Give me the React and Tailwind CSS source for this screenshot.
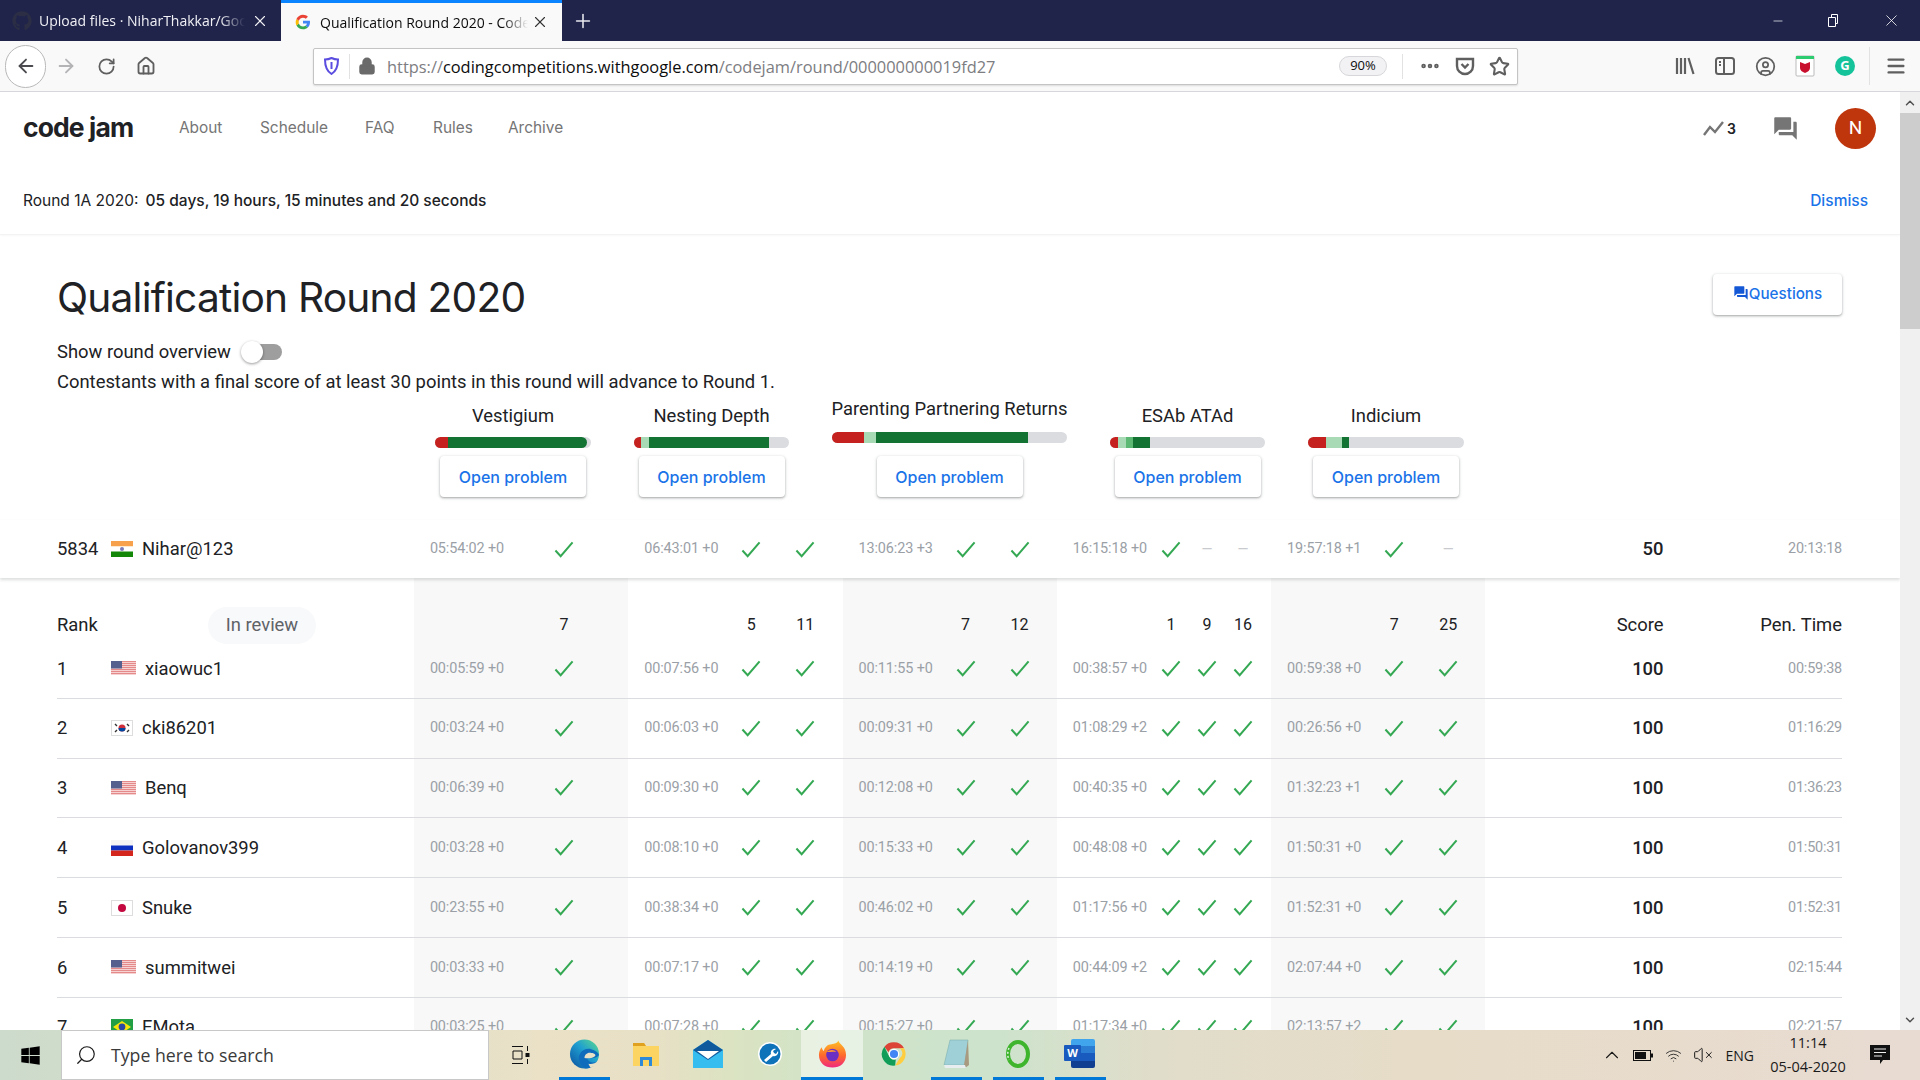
import React from 'react';
import { ArrowLeft, ArrowRight, RotateCw, Home, Lock, Star, X, Plus, Minus, Search, ChevronUp, ChevronDown, Ellipsis, Menu, CircleUser, VolumeX, Wifi } from 'lucide-react';
import { FaGithub, FaWindows } from 'react-icons/fa';

const problems = [
  { name: 'Vestigium', width: 'w-[156px]', titleGap: 'mb-[9px]', barGap: 'mb-[8px]', segs: [['w-[13px]', 'bg-[#c5221f]'], ['w-[139px] rounded-r-full', 'bg-[#137333]']] },
  { name: 'Nesting Depth', width: 'w-[155px]', titleGap: 'mb-[9px]', barGap: 'mb-[8px]', segs: [['w-[7px]', 'bg-[#c5221f]'], ['w-[8px]', 'bg-[#a8dab5]'], ['w-[120px]', 'bg-[#137333]']] },
  { name: 'Parenting Partnering Returns', width: 'w-[235px]', titleGap: 'mb-[11px]', barGap: 'mb-[13px]', segs: [['w-[32px]', 'bg-[#c5221f]'], ['w-[12px]', 'bg-[#a8dab5]'], ['w-[152px]', 'bg-[#137333]']] },
  { name: 'ESAb ATAd', width: 'w-[155px]', titleGap: 'mb-[9px]', barGap: 'mb-[8px]', segs: [['w-[8px]', 'bg-[#c5221f]'], ['w-[8px]', 'bg-[#a8dab5]'], ['w-[7px]', 'bg-[#5bb974]'], ['w-[17px]', 'bg-[#137333]']] },
  { name: 'Indicium', width: 'w-[156px]', titleGap: 'mb-[9px]', barGap: 'mb-[8px]', segs: [['w-[18px]', 'bg-[#c5221f]'], ['w-[16px]', 'bg-[#a8dab5]'], ['w-[7px]', 'bg-[#137333]']] },
];

const ok1 = ['c'];
const ok2 = ['c', 'c'];
const ok3 = ['c', 'c', 'c'];
const allOk = [ok1, ok2, ok2, ok3, ok2];

const rows = [
  { rank: 1, flag: 'us', name: 'xiaowuc1', times: ['00:05:59 +0', '00:07:56 +0', '00:11:55 +0', '00:38:57 +0', '00:59:38 +0'], pen: '00:59:38' },
  { rank: 2, flag: 'kr', name: 'cki86201', times: ['00:03:24 +0', '00:06:03 +0', '00:09:31 +0', '01:08:29 +2', '00:26:56 +0'], pen: '01:16:29' },
  { rank: 3, flag: 'us', name: 'Benq', times: ['00:06:39 +0', '00:09:30 +0', '00:12:08 +0', '00:40:35 +0', '01:32:23 +1'], pen: '01:36:23' },
  { rank: 4, flag: 'ru', name: 'Golovanov399', times: ['00:03:28 +0', '00:08:10 +0', '00:15:33 +0', '00:48:08 +0', '01:50:31 +0'], pen: '01:50:31' },
  { rank: 5, flag: 'jp', name: 'Snuke', times: ['00:23:55 +0', '00:38:34 +0', '00:46:02 +0', '01:17:56 +0', '01:52:31 +0'], pen: '01:52:31' },
  { rank: 6, flag: 'us', name: 'summitwei', times: ['00:03:33 +0', '00:07:17 +0', '00:14:19 +0', '00:44:09 +2', '02:07:44 +0'], pen: '02:15:44' },
  { rank: 7, flag: 'br', name: 'EMota', times: ['00:03:25 +0', '00:07:28 +0', '00:15:27 +0', '01:17:34 +0', '02:13:57 +2'], pen: '02:21:57' },
];

const Flag = ({ code }) => {
  if (code === 'us') {
    return (
      <svg width="25" height="14" viewBox="0 0 25 14" className="shrink-0">
        <rect width="25" height="14" fill="#fbe4e4" />
        {[0, 2, 4, 6, 8, 10, 12].map(y => <rect key={y} y={y} width="25" height="1.2" fill="#e58a8a" />)}
        <rect width="11" height="7.5" fill="#55608f" />
      </svg>
    );
  }
  const box = 'shrink-0';
  if (code === 'kr') {
    return (
      <svg width="22" height="16" viewBox="0 0 22 16" className={box}>
        <rect x=".5" y=".5" width="21" height="15" fill="#fff" stroke="#ddd" />
        <circle cx="11" cy="8" r="3.5" fill="#cd2e3a" />
        <path d="M7.5 8a3.5 3.5 0 0 0 7 0z" fill="#0047a0" />
        <path d="M4 4l2 2M16 4l2 2M4 12l2-2M16 12l2-2" stroke="#333" strokeWidth="1.4" />
      </svg>
    );
  }
  if (code === 'ru') {
    return (
      <svg width="22" height="16" viewBox="0 0 22 16" className={box}>
        <rect width="22" height="5.5" fill="#f4f4f4" />
        <rect y="5.5" width="22" height="5" fill="#0c2fc0" />
        <rect y="10.5" width="22" height="5.5" fill="#d5261e" />
      </svg>
    );
  }
  if (code === 'jp') {
    return (
      <svg width="22" height="16" viewBox="0 0 22 16" className={box}>
        <rect x=".5" y=".5" width="21" height="15" fill="#fff" stroke="#ddd" />
        <circle cx="11" cy="8" r="4" fill="#c3093f" />
      </svg>
    );
  }
  if (code === 'br') {
    return (
      <svg width="22" height="16" viewBox="0 0 22 16" className={box}>
        <rect width="22" height="16" fill="#229e45" />
        <path d="M11 2l9 6-9 6-9-6z" fill="#f8e509" />
        <circle cx="11" cy="8" r="3.4" fill="#2b49a3" />
      </svg>
    );
  }
  return (
    <svg width="22" height="16" viewBox="0 0 22 16" className={box}>
      <rect width="22" height="5.5" fill="#f7a14c" />
      <rect y="5.5" width="22" height="5" fill="#fff" />
      <rect y="10.5" width="22" height="5.5" fill="#138808" />
      <circle cx="11" cy="8" r="2" fill="#7a7ab8" />
    </svg>
  );
};

const Check = () => (
  <svg width="21" height="17" viewBox="0 0 21 17" fill="none" stroke="#34a853" strokeWidth="2.1">
    <path d="M1.5 9.5l5.5 6L19.5 1" />
  </svg>
);

const Mark = ({ value }) => {
  if (value === 'c') return <Check />;
  if (value === '-') return <span className="text-[14px] text-[#c8cace]">—</span>;
  return <span className="text-[16px] text-[#202124]">{value}</span>;
};

// one problem column: 214px wide, penalty time on the left and the marks on the right
const ProblemCell = ({ time, marks, shaded, pad }) => (
  <div className={`flex w-[214.3px] shrink-0 items-center ${shaded ? 'bg-[#f8f8f8]' : ''} ${pad}`}>
    <div className="w-[96px] shrink-0 pl-[10px] text-center text-[14.4px] whitespace-nowrap tracking-[-0.1px] text-[#9aa0a6]">{time}</div>
    <div className="flex w-[108px] shrink-0 items-center justify-around">
      {marks.map((m, i) => <div key={i} className="flex w-[20px] justify-center"><Mark value={m} /></div>)}
    </div>
  </div>
);

const Row = ({ left, times, marks, score, pen, className = '', stripes = true, pad = '', penClass = 'text-[14.4px] tracking-[-0.2px] text-[#9aa0a6]', scoreClass = 'text-[18.4px] font-medium text-[#202124]' }) => (
  <div className={`flex ${className}`}>
    <div className={`flex w-[357px] shrink-0 items-center ${pad}`}>{left}</div>
    {marks.map((m, i) => (
      <ProblemCell key={i} time={times ? times[i] : ''} marks={m} shaded={stripes && i % 2 === 0} pad={pad} />
    ))}
    <div className={`flex w-[178px] shrink-0 items-center justify-end ${scoreClass} ${pad}`}>{score}</div>
    <div className={`flex flex-1 items-center justify-end ${penClass} ${pad}`}>{pen}</div>
  </div>
);

const Contestant = ({ rank, flag, name, rankWidth = 'w-[54px]' }) => (
  <div className="flex items-center text-[18.4px] text-[#202124]">
    <span className={rankWidth}>{rank}</span>
    <div className="flex items-center gap-[9px]">
      <Flag code={flag} />
      <span>{name}</span>
    </div>
  </div>
);

const GoogleG = () => (
  <svg width="16" height="16" viewBox="0 0 48 48">
    <path fill="#4285f4" d="M45 24.5c0-1.600-.1-3.100-.4-4.500H24v8.500h11.800c-.5 2.700-2 5-4.400 6.600l7 5.400C42.500 36.700 45 31.100 45 24.500z" />
    <path fill="#34a853" d="M24 46c5.900 0 10.900-2 14.500-5.400l-7-5.400c-2 1.300-4.500 2.100-7.500 2.100-5.700 0-10.600-3.900-12.300-9.100l-7.300 5.600C7.900 41 15.400 46 24 46z" />
    <path fill="#fbbc05" d="M11.700 28.700c-.4-1.300-.7-2.700-.7-4.200s.3-2.900.7-4.200l-7.300-5.600C2.900 17.700 2 20.800 2 24.500s.9 6.800 2.400 9.800z" />
    <path fill="#ea4335" d="M24 11.200c3.200 0 6.100 1.100 8.400 3.300l6.300-6.300C34.900 4.700 29.900 2.500 24 2.500 15.400 2.500 7.900 7.900 4.400 14.700l7.300 5.600c1.700-5.200 6.600-9.100 12.300-9.100z" />
  </svg>
);

const ToolIcon = ({ children, className = '' }) => (
  <div className={`flex w-[40px] shrink-0 items-center justify-center text-[#5f5f5f] ${className}`}>{children}</div>
);

const UrlIcon = ({ children, className = '' }) => (
  <div className={`flex w-[35px] shrink-0 items-center justify-center text-[#5f5f5f] ${className}`}>{children}</div>
);

const Chrome = () => (
  <div className="flex shrink-0 flex-col font-['Open_Sans',sans-serif]">
    {/* tab strip */}
    <div className="flex h-[41px] items-stretch bg-[#20244a] text-[14px]">
      <div className="flex w-[281px] items-center text-[#f0f0f5]">
        <FaGithub size={20} className="ml-[12px] mr-[7px] text-[#2b2e45]" />
        <span className="w-[206px] overflow-hidden whitespace-nowrap [mask-image:linear-gradient(90deg,black_88%,transparent)]">Upload files · NiharThakkar/GoogleCodeJam</span>
        <X size={18} strokeWidth={1.5} className="ml-[6px]" />
      </div>
      <div className="flex w-[281px] items-center border-t-[3px] border-[#0a84ff] bg-[#f9f9fa] text-[#0c0c0d]">
        <div className="ml-[14px] mr-[9px]"><GoogleG /></div>
        <span className="w-[208px] overflow-hidden whitespace-nowrap [mask-image:linear-gradient(90deg,black_88%,transparent)]">Qualification Round 2020 - Code Jam</span>
        <X size={18} strokeWidth={1.5} className="ml-[3px] text-[#333]" />
      </div>
      <div className="flex w-[42px] items-center justify-center text-[#e8e8ef]"><Plus size={22} strokeWidth={1.7} /></div>
      <div className="ml-auto flex w-[57px] items-center justify-center text-white"><Minus size={14} strokeWidth={1.2} /></div>
      <div className="flex w-[57px] items-center justify-center text-white">
        <svg width="13" height="13" viewBox="0 0 13 13" fill="none" stroke="currentColor"><path d="M3.500 3V.5h6v9H7.500M.5 3.500h7v9h-7z" /></svg>
      </div>
      <div className="flex w-[57px] items-center justify-center text-white"><X size={19} strokeWidth={1} /></div>
    </div>

    {/* toolbar */}
    <div className="flex h-[51px] items-center border-b border-[#d7d7db] bg-[#f9f9fa]">
      <div className="ml-[5px] flex h-[43px] w-[41px] items-center justify-center rounded-full border border-[#b8b8b8] bg-white text-[#4a4a4f]"><ArrowLeft size={22} strokeWidth={2} /></div>
      <ToolIcon><ArrowRight size={22} strokeWidth={2} className="text-[#b4b4b6]" /></ToolIcon>
      <ToolIcon><RotateCw size={19} strokeWidth={2.2} /></ToolIcon>
      <ToolIcon><Home size={20} strokeWidth={2.2} /></ToolIcon>
      {/* url bar */}
      <div className="ml-[147px] flex h-[37px] w-[1205px] shrink-0 items-center rounded-[2px] border border-[#c4c4c4] bg-white shadow-[0_1px_2px_rgba(0,0,0,0.12)]">
        <div className="flex h-[25px] w-[36px] shrink-0 items-center justify-center border-r border-[#e2e2e2]">
          <svg width="15" height="18" viewBox="0 0 15 18"><path d="M7.500 1c2.500 1.200 4.500 1.500 6.500 1.500 0 7-1.500 11.500-6.500 14.500C2.500 14 1 9.500 1 2.500 3 2.500 5 2.200 7.500 1z" fill="#fff" stroke="#5b4de0" strokeWidth="2" /><path d="M6.500 5h2v7h-2z" fill="#5b4de0" /></svg>
        </div>
        <div className="flex w-[37px] shrink-0 items-center justify-center pr-[4px] text-[#6a6a6a]"><Lock size={18} strokeWidth={2.6} fill="currentColor" /></div>
        <div className="flex-1 pt-[3px] whitespace-nowrap text-[16.4px] text-[#7d7d82]">
          <span>https://</span><span className="text-[#0c0c0d]">codingcompetitions.withgoogle.com</span><span>/codejam/round/000000000019fd27</span>
        </div>
        <div className="flex h-[20px] w-[48px] shrink-0 items-center justify-center rounded-full border border-[#d7d7db] bg-[#f2f2f4] text-[13px] text-[#0c0c0d]">90%</div>
        <div className="ml-[15px] h-[25px] w-px bg-[#e2e2e2]" />
        <UrlIcon className="ml-[9px]"><Ellipsis size={22} strokeWidth={3} /></UrlIcon>
        <UrlIcon>
          <svg width="20" height="20" viewBox="0 0 20 20" fill="none" stroke="currentColor" strokeWidth="2.400"><path d="M2 3h16v7a8 8 0 0 1-16 0z" /><path d="M6.500 8l3.500 3.500L13.500 8" /></svg>
        </UrlIcon>
        <UrlIcon><Star size={21} strokeWidth={2.4} /></UrlIcon>
      </div>
      <ToolIcon className="ml-[147px]">
        <svg width="20" height="20" viewBox="0 0 20 20" fill="none" stroke="currentColor" strokeWidth="2.200"><path d="M2 2v16M6 2v16M10 2v16M13.500 2l5 16" /></svg>
      </ToolIcon>
      <ToolIcon>
        <svg width="20" height="20" viewBox="0 0 20 20" fill="none" stroke="currentColor" strokeWidth="2"><rect x="1" y="2" width="18" height="16" rx="2.500" /><path d="M9 2v16" /><path d="M4 6h2M4 9h2" /></svg>
      </ToolIcon>
      <ToolIcon><CircleUser size={21} strokeWidth={2} /></ToolIcon>
      <ToolIcon>
        <svg width="20" height="22" viewBox="0 0 20 22"><rect x="1" y="1" width="18" height="20" rx="1" fill="#fff" stroke="#bbb" /><rect x="1" y="1" width="18" height="3" fill="#2ecc71" /><path d="M5 7l5 2 5-2v6c0 2-2 4-5 5-3-1-5-3-5-5z" fill="#c8102e" /></svg>
      </ToolIcon>
      <ToolIcon>
        <div className="flex h-[20px] w-[20px] items-center justify-center rounded-full bg-[#15c39a] text-[13px] font-bold text-white">G</div>
      </ToolIcon>
      <div className="ml-[4px] h-[38px] w-px bg-[#e2e2e2]" />
      <ToolIcon className="ml-[6px]"><Menu size={22} strokeWidth={2.6} /></ToolIcon>
    </div>
  </div>
);

const ForumIcon = ({ size, className }) => (
  <svg width={size} height={size} viewBox="0 0 24 24" fill="currentColor" className={className}>
    <path d="M21 6h-2v9H6v2c0 .55.45 1 1 1h11l4 4V7c0-.55-.45-1-1-1zm-4 6V3c0-.55-.45-1-1-1H3c-.55 0-1 .45-1 1v14l4-4h10c.55 0 1-.45 1-1z" />
  </svg>
);

const cardShadow = 'shadow-[0_1px_2px_rgba(60,64,67,0.35),0_1px_3px_1px_rgba(60,64,67,0.12)]';

const Page = () => (
  <div className="min-w-0 flex-1 overflow-hidden bg-white font-[Roboto,sans-serif] text-[#202124]">
    {/* site nav */}
    <div className="flex h-[72px] items-center pl-[23px] font-[Inter,sans-serif]">
      <span className="w-[156px] text-[26.500px] font-bold tracking-[-0.9px] text-[#202124]">code jam</span>
      <nav className="flex text-[15.400px] text-[#757575]">
        <span className="w-[81px]">About</span>
        <span className="w-[105px]">Schedule</span>
        <span className="w-[68px]">FAQ</span>
        <span className="w-[75px]">Rules</span>
        <span>Archive</span>
      </nav>
      <div className="ml-auto flex items-center">
        <svg width="24" height="16" viewBox="0 0 24 16" fill="none" stroke="#757575" strokeWidth="2.400"><path d="M1 15l6-8 5 5 8-10" /></svg>
        <span className="text-[14px] font-semibold text-[#202124]">3</span>
        <ForumIcon size={27} className="ml-[36px] text-[#757575]" />
        <div className="ml-[36px] mr-[24px] flex h-[41px] w-[41px] items-center justify-center rounded-full bg-[#bf360c] font-[Roboto,sans-serif] text-[19px] text-white">N</div>
      </div>
    </div>

    {/* round countdown */}
    <div className="flex h-[71px] items-center justify-between border-b border-[#f3f3f3] pt-[4px] pl-[23px] pr-[32px] font-[Inter,sans-serif] text-[15.500px] shadow-[0_1px_2px_rgba(0,0,0,0.03)]">
      <div><span>Round 1A 2020:</span><span className="ml-[7px] font-medium">05 days, 19 hours, 15 minutes and 20 seconds</span></div>
      <span className="font-medium text-[#1a73e8]">Dismiss</span>
    </div>

    <div className="pl-[57px] pr-[58px]">
      <div className="flex items-start justify-between pt-[39px]">
        <h1 className="h-[48px] font-[Inter,sans-serif] text-[40.700px] leading-[48px] font-normal tracking-[-0.8px]">Qualification Round 2020</h1>
        <button className={`flex h-[41px] w-[129px] items-center justify-center rounded-[4px] bg-white font-[Inter,sans-serif] text-[15.200px] font-medium text-[#1a73e8] ${cardShadow}`}>
          <ForumIcon size={16} className="mb-[4px] text-[#1558d6]" />Questions
        </button>
      </div>
      <div className="mt-[17px] flex h-[26px] items-center text-[18.400px]">
        <span>Show round overview</span>
        <div className="relative ml-[14px] h-[16px] w-[37px] rounded-full bg-[#9e9e9e]">
          <div className="absolute top-[-3px] left-[-4px] h-[22px] w-[22px] rounded-full bg-white shadow-[0_1px_3px_rgba(0,0,0,0.4)]" />
        </div>
      </div>
      <p className="mt-[5px] h-[24px] text-[18.400px] leading-[24px]">Contestants with a final score of at least 30 points in this round will advance to Round 1.</p>

      <div className="mt-[3px] flex items-end gap-[43px] pl-[378px]">
        {problems.map(p => (
          <div key={p.name} className={`flex ${p.width} shrink-0 flex-col items-center`}>
            <div className={`h-[24px] text-[18.400px] leading-[24px] whitespace-nowrap ${p.titleGap}`}>{p.name}</div>
            <div className={`flex h-[11px] w-full overflow-hidden rounded-full bg-[#dadce0] ${p.barGap}`}>
              {p.segs.map(([w, c], i) => <div key={i} className={`${w} ${c}`} />)}
            </div>
            <button className={`h-[41px] w-[146px] rounded-[4px] bg-white font-[Inter,sans-serif] text-[16px] font-medium text-[#1a73e8] ${cardShadow}`}>Open problem</button>
          </div>
        ))}
      </div>
    </div>

    {/* own result */}
    <div className="relative z-10 mt-[23px] pl-[57px] pr-[58px] shadow-[0_2px_3px_rgba(60,64,67,0.18)]">
      <Row
        className="h-[58px]"
        stripes={false}
        left={<Contestant rank="5834" flag="in" name="Nihar@123" />}
        times={['05:54:02 +0', '06:43:01 +0', '13:06:23 +3', '16:15:18 +0', '19:57:18 +1']}
        marks={[ok1, ok2, ok2, ['c', '-', '-'], ['c', '-']]}
        score="50"
        pen="20:13:18"
      />
    </div>

    {/* scoreboard */}
    <div className="pl-[57px] pr-[58px]">
      <Row
        className="h-[61px]"
        pad="pt-[33px]"
        left={
          <div className="flex items-center text-[18.400px]">
            <span className="w-[151px]">Rank</span>
            <span className="flex h-[37px] w-[108px] items-center justify-center rounded-full bg-[#f8f9fa] text-[#5f6368]">In review</span>
          </div>
        }
        marks={[['7'], ['5', '11'], ['7', '12'], ['1', '9', '16'], ['7', '25']]}
        score={<span className="text-[18.400px] font-normal">Score</span>}
        pen={<span className="text-[18.400px] tracking-normal text-[#202124]">Pen. Time</span>}
      />
      {rows.map(r => (
        <Row
          key={r.rank}
          className="h-[59.8px] border-b border-[#dadce0]"
          left={<Contestant rank={r.rank} flag={r.flag} name={r.name} />}
          times={r.times}
          marks={allOk}
          score="100"
          pen={r.pen}
        />
      ))}
    </div>
  </div>
);

const Scrollbar = () => (
  <div className="flex w-[20px] shrink-0 flex-col bg-[#f0f0f0]">
    <div className="flex h-[21px] items-center justify-center text-[#505050]"><ChevronUp size={14} strokeWidth={2.5} /></div>
    <div className="h-[216px] bg-[#cdcdcd]" />
    <div className="mt-auto flex h-[21px] items-center justify-center text-[#505050]"><ChevronDown size={14} strokeWidth={2.5} /></div>
  </div>
);

const TaskSlot = ({ children, open, active }) => (
  <div className={`flex h-full w-[62px] shrink-0 flex-col items-center ${active ? 'bg-white/50' : ''}`}>
    <div className="flex flex-1 items-center justify-center">{children}</div>
    <div className={`h-[3px] ${active ? 'w-full' : 'w-[51px]'} ${open ? 'bg-[#0078d7]' : ''}`} />
  </div>
);

const Taskbar = () => (
  <div className="flex h-[50px] shrink-0 items-center bg-[linear-gradient(90deg,#cddbcc_0%,#d8dfcb_15%,#eae1c7_28%,#e8e0c6_34%,#dbe3c2_38%,#cfe3c9_44%,#cde3cc_52%,#e0ddca_60%,#e7dcc8_75%,#e8dbd2_100%)] font-['Open_Sans',sans-serif] text-[#1a1a1a]">
    <div className="flex w-[61px] shrink-0 justify-center"><FaWindows size={21} className="text-black" /></div>
    <div className="flex h-full w-[428px] shrink-0 items-center border border-[#c8c8c8] bg-white">
      <Search size={22} strokeWidth={1.3} className="ml-[13px] mr-[14px] -scale-x-100" />
      <span className="text-[17.700px] text-[#3a3a3a]">Type here to search</span>
    </div>
    <div className="flex h-full w-[64px] shrink-0 items-center justify-center">
      <svg width="20" height="20" viewBox="0 0 20 20" fill="none" stroke="#111"><path d="M1 1.500h11M1 18.500h11M2 6h9v8H2zM16.500 1v5M16.500 14v5" /><rect x="15" y="8.500" width="3" height="3" fill="#111" /></svg>
    </div>
    <TaskSlot open>
      <svg width="31" height="32" viewBox="0 0 32 32">
        <defs><linearGradient id="edge" x1="1" y1="0" x2="0" y2="1"><stop offset="0" stopColor="#5fdc8c" /><stop offset=".45" stopColor="#1f9fd0" /><stop offset="1" stopColor="#0b4f9e" /></linearGradient></defs>
        <circle cx="16" cy="16" r="15" fill="url(#edge)" />
        <path d="M11 24c-3-7 3-15 12-13 4 1 7 3 8 6-2 3-7 4-12 3 0 3 4 6 10 4-3 5-8 7-12 7-3-1-5-4-6-7z" fill="#0f6cbd" />
        <path d="M16 20c0-3 3-6 7-5 3 0 5 2 4 3-2 2-7 3-11 2z" fill="#e9e1c7" />
        <path d="M20 26c3 1 7 0 10-3l-2 5-6 2z" fill="#e9e1c7" />
      </svg>
    </TaskSlot>
    <TaskSlot>
      <svg width="28" height="28" viewBox="0 0 28 28"><path d="M1 3h11l2 3h13v20H1z" fill="#fcd462" /><path d="M1 3h11l2 3H1z" fill="#e0a020" /><path d="M8 26v-9h12v9h-3v-6H11v6z" fill="#2e8ad8" /></svg>
    </TaskSlot>
    <TaskSlot>
      <svg width="30" height="28" viewBox="0 0 30 28"><path d="M0 10L15 0l15 10v18H0z" fill="#35bdf0" /><path d="M0 10L15 0l15 10-15 10z" fill="#0f5a9c" /><path d="M4 11h22l-11 8z" fill="#fff" /></svg>
    </TaskSlot>
    <TaskSlot>
      <svg width="24" height="24" viewBox="0 0 24 24"><circle cx="12" cy="12" r="12" fill="#fff" /><circle cx="12" cy="12" r="10.500" fill="#0e73b9" /><path d="M6 18l7-6c-1-3 2-6 5-5l-3 2 1 2 2 1 2-3c1 3-2 6-5 5l-7 6z" fill="#fff" /></svg>
    </TaskSlot>
    <TaskSlot open active>
      <svg width="29" height="30" viewBox="0 0 30 30">
        <defs><linearGradient id="ff" x1="0.500" y1="0" x2="0.500" y2="1"><stop offset="0" stopColor="#ffc126" /><stop offset=".55" stopColor="#ff6a2b" /><stop offset="1" stopColor="#f0287f" /></linearGradient></defs>
        <path d="M21 1c1 4 8 6 8 15 0 8-6 13-14 13S1 24 1 16c0-3 1-6 3-8 0 2 1 3 2 4 1-4 4-7 8-7 3-1 6-1 7-4z" fill="url(#ff)" />
        <circle cx="15" cy="16" r="6.500" fill="#6b2fc2" />
        <path d="M9 13c3-3 8-3 10 0-3-1-7 0-10 0z" fill="#ff9a2e" />
      </svg>
    </TaskSlot>
    <TaskSlot>
      <svg width="28" height="28" viewBox="0 0 48 48">
        <path d="M24 4a20 20 0 0 1 17.300 10H24a10 10 0 0 0-9.500 7L7.600 11.500A20 20 0 0 1 24 4z" fill="#db4437" />
        <path d="M41.300 14A20 20 0 0 1 26 43.900L34 31a10 10 0 0 0-1-17z" fill="#ffcd40" />
        <path d="M26 43.900A20 20 0 0 1 7.600 11.500l8.400 17a10 10 0 0 0 11 5z" fill="#0f9d58" />
        <circle cx="24" cy="24" r="9" fill="#fff" /><circle cx="24" cy="24" r="7" fill="#4285f4" />
      </svg>
    </TaskSlot>
    <TaskSlot open>
      <svg width="28" height="30" viewBox="0 0 28 30"><path d="M8 1h18l-3 25H2z" fill="#9fd0d8" stroke="#7aa" strokeWidth=".5" /><path d="M26 1l1 25-4 3 -1-3z" fill="#a89a80" /><path d="M2 26h21l1 3H3z" fill="#e8eef0" /></svg>
    </TaskSlot>
    <TaskSlot open>
      <svg width="28" height="30" viewBox="0 0 28 30" fill="none"><ellipse cx="14" cy="15" rx="10" ry="12" stroke="#3fb52d" strokeWidth="4" /><path d="M5 9a11 13 0 0 0 0 12" stroke="#dfeedd" strokeWidth="1.500" strokeDasharray="2 2" /></svg>
    </TaskSlot>
    <TaskSlot open>
      <div className="flex">
        <div className="relative ml-[6px] h-[29px] w-[24px] rounded-[2px] bg-[linear-gradient(180deg,#41a5ee_25%,#2b7cd3_25%,#2b7cd3_50%,#185abd_50%,#185abd_75%,#103f91_75%)]">
          <div className="absolute top-[6px] left-[-7px] flex h-[16px] w-[17px] items-center justify-center rounded-[1px] bg-[#185abd] text-[11px] font-bold text-white">W</div>
        </div>
      </div>
    </TaskSlot>
    <div className="ml-auto flex items-center">
      <ChevronUp size={22} strokeWidth={1.2} />
      <svg width="20" height="11" viewBox="0 0 20 11" className="ml-[10px]"><rect x=".5" y=".5" width="17" height="10" fill="none" stroke="#111" /><rect x="2" y="2" width="11" height="7" fill="#111" /><rect x="18" y="3.500" width="2" height="4" fill="#111" /></svg>
      <Wifi size={17} strokeWidth={1.2} className="ml-[12px]" />
      <VolumeX size={20} strokeWidth={1.2} className="ml-[11px]" />
      <span className="ml-[13px] text-[14px]">ENG</span>
      <div className="ml-[15px] flex w-[78px] flex-col items-center text-[14.500px] leading-[24px]">
        <span>11:14</span>
        <span>05-04-2020</span>
      </div>
      <svg width="21" height="20" viewBox="0 0 21 20" className="ml-[23px] mr-[29px]"><path d="M0 0h20v15H13l-3 4v-4H0z" fill="#111" /><path d="M4 4h12M4 7.500h12M4 11h8" stroke="#eee" /></svg>
    </div>
  </div>
);

export default function App() {
  return (
    <div className="flex h-screen w-screen flex-col overflow-hidden">
      <Chrome />
      <div className="flex min-h-0 flex-1">
        <Page />
        <Scrollbar />
      </div>
      <Taskbar />
    </div>
  );
}
